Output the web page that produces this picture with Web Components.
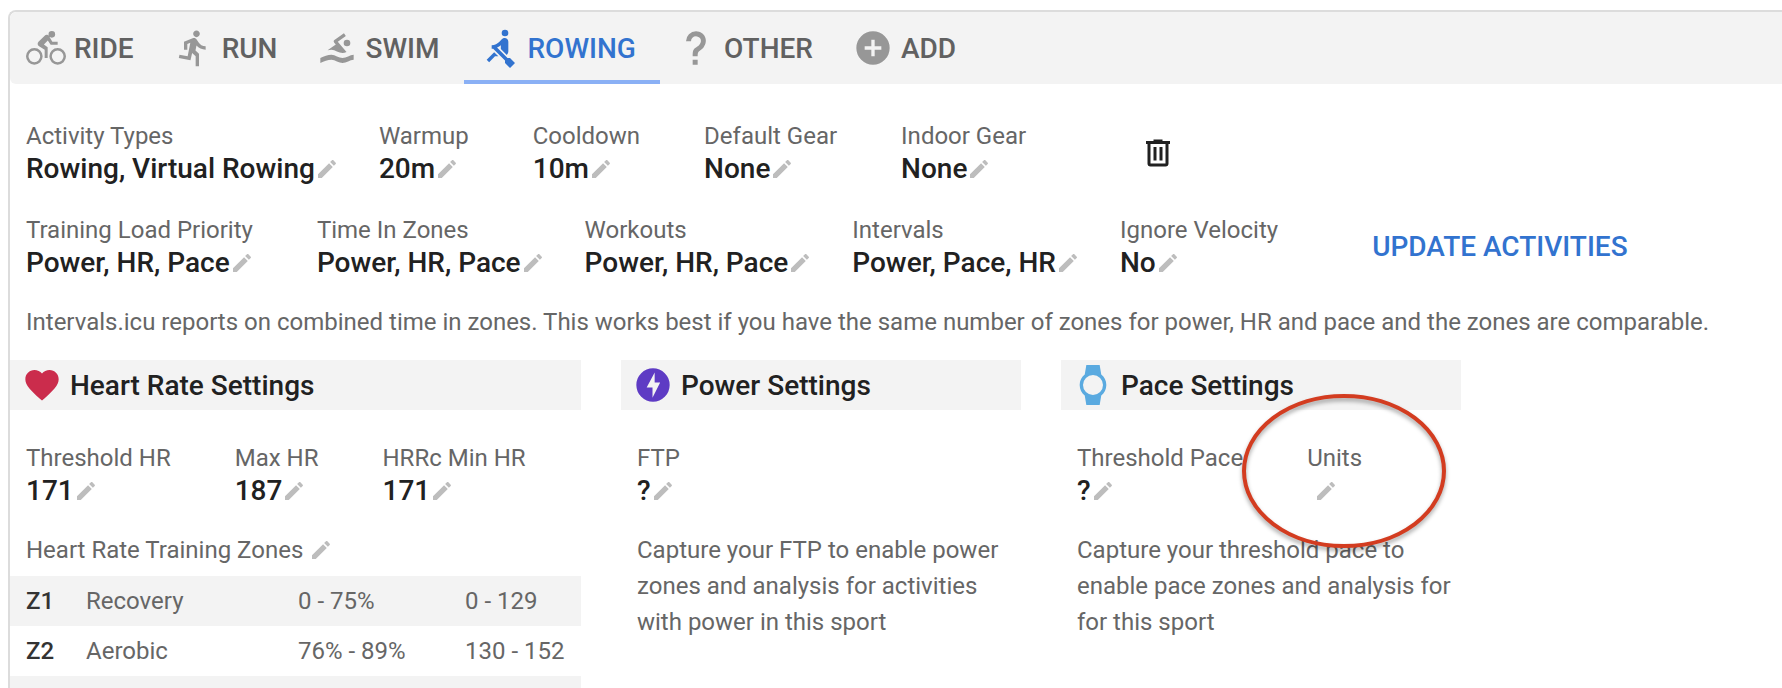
<!DOCTYPE html>
<html lang="en">
<head>
<meta charset="UTF-8">
<meta name="viewport" content="width=device-width, initial-scale=1.0">
<title>Sport Settings</title>
<style>
    :root {
        --text: #212121;
        --muted: #666666;
        --icon: #979797;
        --pencil: #bdbdbd;
        --band: #f3f3f3;
        --line: #dcdcdc;
        --primary: #3273cf;
        --primary-light: #8ab0f5;
    }
    html {
        overflow: hidden;
    }
    body {
        box-sizing: border-box;
        height: 100vh;
        margin: 0;
        padding: 10px 0 0 8px;
        overflow: hidden;
        background: #fff;
        color: var(--text);
        font-family: Roboto, "Liberation Sans", sans-serif;
        font-size: 24px;
    }
</style>
</head>
<body>

<sport-settings>
    <sport-tabs slot="tabs">
        <sport-tab icon="bike">RIDE</sport-tab>
        <sport-tab icon="run">RUN</sport-tab>
        <sport-tab icon="swim">SWIM</sport-tab>
        <sport-tab icon="rowing" active>ROWING</sport-tab>
        <sport-tab icon="help">OTHER</sport-tab>
        <sport-tab icon="plus">ADD</sport-tab>
    </sport-tabs>

    <field-row>
        <edit-field label="Activity Types">Rowing, Virtual Rowing</edit-field>
        <edit-field label="Warmup">20m</edit-field>
        <edit-field label="Cooldown">10m</edit-field>
        <edit-field label="Default Gear">None</edit-field>
        <edit-field label="Indoor Gear">None</edit-field>
        <icon-button icon="trash" label="Delete sport"></icon-button>
    </field-row>

    <field-row>
        <edit-field label="Training Load Priority">Power, HR, Pace</edit-field>
        <edit-field label="Time In Zones">Power, HR, Pace</edit-field>
        <edit-field label="Workouts">Power, HR, Pace</edit-field>
        <edit-field label="Intervals">Power, Pace, HR</edit-field>
        <edit-field label="Ignore Velocity">No</edit-field>
        <text-button>UPDATE ACTIVITIES</text-button>
    </field-row>

    <help-text slot="note">Intervals.icu reports on combined time in zones. This works best if you have the same number of zones for power, HR and pace and the zones are comparable.</help-text>

    <settings-panel slot="panels" icon="heart" heading="Heart Rate Settings" style="--accent: #cb2c4c">
        <field-row>
            <edit-field label="Threshold HR">171</edit-field>
            <edit-field label="Max HR">187</edit-field>
            <edit-field label="HRRc Min HR">171</edit-field>
        </field-row>
        <zone-table heading="Heart Rate Training Zones"></zone-table>
    </settings-panel>

    <settings-panel slot="panels" icon="bolt" heading="Power Settings" style="--accent: #5e3bc4">
        <field-row>
            <edit-field label="FTP">?</edit-field>
        </field-row>
        <help-text>Capture your FTP to enable power zones and analysis for activities with power in this sport</help-text>
    </settings-panel>

    <settings-panel slot="panels" icon="watch" heading="Pace Settings" style="--accent: #5aaae0">
        <field-row>
            <edit-field label="Threshold Pace">?</edit-field>
            <edit-field label="Units" highlight>&nbsp;</edit-field>
        </field-row>
        <help-text>Capture your threshold pace to enable pace zones and analysis for for this sport</help-text>
    </settings-panel>
</sport-settings>

<script>
const ICONS = {
    bike: 'M5,20.5A3.5,3.5 0 0,1 1.5,17A3.5,3.5 0 0,1 5,13.5A3.5,3.5 0 0,1 8.5,17A3.5,3.5 0 0,1 5,20.5M5,12A5,5 0 0,0 0,17A5,5 0 0,0 5,22A5,5 0 0,0 10,17A5,5 0 0,0 5,12M14.8,10H19V8.2H15.8L13.86,4.93C13.57,4.43 13,4.1 12.4,4.1C11.93,4.1 11.5,4.29 11.2,4.6L7.5,8.29C7.19,8.6 7,9 7,9.5C7,10.13 7.33,10.66 7.85,10.97L11.2,13V18H13V11.5L10.75,9.85L13.07,7.5M19,20.5A3.5,3.5 0 0,1 15.5,17A3.5,3.5 0 0,1 19,13.5A3.5,3.5 0 0,1 22.5,17A3.5,3.5 0 0,1 19,20.5M19,12A5,5 0 0,0 14,17A5,5 0 0,0 19,22A5,5 0 0,0 24,17A5,5 0 0,0 19,12M15.5,5.8A2,2 0 0,0 17.5,3.8A2,2 0 0,0 15.5,1.8A2,2 0 0,0 13.5,3.8A2,2 0 0,0 15.5,5.8Z',
    run: 'M13.49 5.48c1.1 0 2-.9 2-2s-.9-2-2-2-2 .9-2 2 .9 2 2 2zm-3.6 13.9l1-4.4 2.1 2v6h2v-7.5l-2.1-2 .6-3c1.3 1.5 3.3 2.5 5.5 2.5v-2c-1.9 0-3.5-1-4.3-2.4l-1-1.6c-.4-.6-1-1-1.7-1-.3 0-.5.1-.8.1l-5.2 2.2v4.7h2v-3.4l1.8-.7-1.6 8.1-4.9-1-.4 2 7 1.4z',
    swim: 'M2,18C4.22,17 6.44,16 8.67,16C10.89,16 13.11,18 15.33,18C17.56,18 19.78,16 22,16V19C19.78,19 17.56,21 15.33,21C13.11,21 10.89,19 8.67,19C6.44,19 4.22,20 2,21V18M8.67,13C7.89,13 7.12,13.12 6.35,13.32L11.27,9.88L10.23,8.64C10.09,8.47 10,8.24 10,8C10,7.66 10.17,7.35 10.44,7.17L16.16,3.17L17.31,4.8L12.47,8.19L17.7,14.42C16.91,14.75 16.12,15 15.33,15C13.11,15 10.89,13 8.67,13M18,7A2,2 0 0,1 20,9A2,2 0 0,1 18,11A2,2 0 0,1 16,9A2,2 0 0,1 18,7Z',
    rowing: 'M8.5,14.5L4,19L5.5,20.5L9,17H11L8.5,14.5M15,1A2,2 0 0,0 13,3A2,2 0 0,0 15,5A2,2 0 0,0 17,3A2,2 0 0,0 15,1M21,21L18,24L15,21V19.5L7.91,12.41C7.6,12.46 7.3,12.5 7,12.5V10.32C8.66,10.35 10.61,9.45 11.67,8.28L13.07,6.73C13.26,6.5 13.5,6.35 13.76,6.23C14.05,6.09 14.38,6 14.72,6H14.75C16,6 17,7 17,8.26V14C17,14.85 16.65,15.62 16.08,16.17L12.5,12.59V10.32C11.87,10.84 11.07,11.34 10.21,11.71L16.5,18H18L21,21Z',
    help: 'M10,19H13V22H10V19M12,2C17.35,2.22 19.68,7.62 16.5,11.67C15.67,12.67 14.33,13.33 13.67,14.17C13,15 13,16 13,17H10C10,15.33 10,13.92 10.67,12.92C11.33,11.92 12.67,11.33 13.5,10.67C15.92,8.43 15.32,5.26 12,5A3,3 0 0,0 9,8H6A6,6 0 0,1 12,2Z',
    plus: 'M17,13H13V17H11V13H7V11H11V7H13V11H17M12,2A10,10 0 0,0 2,12A10,10 0 0,0 12,22A10,10 0 0,0 22,12A10,10 0 0,0 12,2Z',
    pencil: 'M20.71,7.04C21.1,6.65 21.1,6 20.71,5.63L18.37,3.29C18,2.9 17.35,2.9 16.96,3.29L15.12,5.12L18.87,8.87M3,17.25V21H6.75L17.81,9.93L14.06,6.18L3,17.25Z',
    trash: 'M9,3V4H4V6H5V19A2,2 0 0,0 7,21H17A2,2 0 0,0 19,19V6H20V4H15V3H9M7,6H17V19H7V6M9,8V17H11V8H9M13,8V17H15V8H13Z',
    heart: 'M12,21.35L10.55,20.03C5.4,15.36 2,12.27 2,8.5C2,5.41 4.42,3 7.5,3C9.24,3 10.91,3.81 12,5.08C13.09,3.81 14.76,3 16.5,3C19.58,3 22,5.41 22,8.5C22,12.27 18.6,15.36 13.45,20.03L12,21.35Z',
    bolt: 'M12,2A10,10 0 0,0 2,12A10,10 0 0,0 12,22A10,10 0 0,0 22,12A10,10 0 0,0 12,2M11.7,19.6V13.5H8.2L13,4.5V10.5H16.3L11.7,19.6Z',
    watch: 'M6,12A6,6 0 0,1 12,6A6,6 0 0,1 18,12A6,6 0 0,1 12,18A6,6 0 0,1 6,12M20,12C20,9.45 18.81,7.19 16.95,5.73L16,0H8L7.05,5.73C5.19,7.19 4,9.45 4,12C4,14.54 5.19,16.81 7.05,18.27L8,24H16L16.95,18.27C18.81,16.81 20,14.54 20,12Z'
};

const BUTTON_RESET = `
    button {
        margin: 0;
        padding: 0;
        border: none;
        background: none;
        color: inherit;
        font: inherit;
        cursor: pointer;
    }
`;

class MdiIcon extends HTMLElement {
    connectedCallback() {
        this.attachShadow({ mode: 'open' });
        this.shadowRoot.innerHTML = `
            <style>
                :host {
                    display: block;
                    flex: none;
                    width: var(--size, 40px);
                    height: var(--size, 40px);
                }
                svg {
                    display: block;
                    width: 100%;
                    height: 100%;
                    fill: currentColor;
                }
            </style>
            <svg viewBox="0 0 24 24" aria-hidden="true">
                <path d="${ICONS[this.getAttribute('name')]}"/>
            </svg>
        `;
    }
}

class IconButton extends HTMLElement {
    connectedCallback() {
        this.attachShadow({ mode: 'open' });
        this.shadowRoot.innerHTML = `
            <style>
                ${BUTTON_RESET}
                :host {
                    display: block;
                    --size: 36px;
                    padding-left: 50px;
                }
                :host([small]) {
                    --size: 24px;
                    padding: 0;
                    color: var(--pencil);
                }
                button { display: block; }
            </style>
            <button type="button" aria-label="${this.getAttribute('label')}">
                <mdi-icon name="${this.getAttribute('icon')}"></mdi-icon>
            </button>
        `;
    }
}

class TextButton extends HTMLElement {
    connectedCallback() {
        this.attachShadow({ mode: 'open' });
        this.shadowRoot.innerHTML = `
            <style>
                ${BUTTON_RESET}
                :host {
                    display: block;
                    color: var(--primary);
                    font-size: 28px;
                    font-weight: 500;
                    line-height: 32px;
                }
                button { padding: 16px 30px; }
            </style>
            <button type="button"><slot></slot></button>
        `;
    }
}

class SportTabs extends HTMLElement {
    connectedCallback() {
        this.attachShadow({ mode: 'open' });
        this.shadowRoot.innerHTML = `
            <style>
                :host {
                    display: flex;
                    height: 72px;
                    background: var(--band);
                    border-radius: 6px 0 0 6px;
                }
            </style>
            <slot></slot>
        `;
    }
}

class SportTab extends HTMLElement {
    connectedCallback() {
        this.attachShadow({ mode: 'open' });
        this.shadowRoot.innerHTML = `
            <style>
                ${BUTTON_RESET}
                :host {
                    display: flex;
                    color: #616161;
                    font-size: 28px;
                    font-weight: 500;
                }
                button {
                    display: flex;
                    align-items: center;
                    gap: 8px;
                    padding: 0 24px 0 16px;
                }
                mdi-icon { color: var(--icon); }
                :host([active]) {
                    color: var(--primary);
                    box-shadow: inset 0 -4px var(--primary-light);
                }
                :host([active]) mdi-icon { color: inherit; }
            </style>
            <button type="button">
                <mdi-icon name="${this.getAttribute('icon')}"></mdi-icon>
                <span><slot></slot></span>
            </button>
        `;
    }
}

class FieldRow extends HTMLElement {
    connectedCallback() {
        this.attachShadow({ mode: 'open' });
        this.shadowRoot.innerHTML = `
            <style>
                :host {
                    display: flex;
                    align-items: center;
                    gap: 40px;
                    padding: 0 16px;
                }
            </style>
            <slot></slot>
        `;
    }
}

class EditField extends HTMLElement {
    connectedCallback() {
        const label = this.getAttribute('label');
        this.attachShadow({ mode: 'open' });
        this.shadowRoot.innerHTML = `
            <style>
                :host {
                    display: block;
                    position: relative;
                    white-space: nowrap;
                }
                .label {
                    padding-right: 24px;
                    color: var(--muted);
                    line-height: 32px;
                }
                .value {
                    display: flex;
                    align-items: center;
                    font-size: 28px;
                    font-weight: 500;
                    line-height: 34px;
                }
                .text { white-space: pre; }
                /* ring that calls out a field */
                .ring {
                    position: absolute;
                    left: -69px;
                    top: -52px;
                    width: 212px;
                    height: 164px;
                    overflow: visible;
                    pointer-events: none;
                    filter: drop-shadow(0 3px 2px rgba(0, 0, 0, 0.35));
                }
            </style>
            <div class="label">${label}</div>
            <div class="value">
                <span class="text"><slot></slot></span>
                <icon-button small icon="pencil" label="Edit ${label}"></icon-button>
            </div>
            ${this.hasAttribute('highlight') ? `
            <svg class="ring" viewBox="0 0 212 164" aria-hidden="true">
                <ellipse cx="106" cy="81" rx="100" ry="75" fill="none" stroke="#d33c20" stroke-width="4"/>
            </svg>` : ''}
        `;
    }
}

class HelpText extends HTMLElement {
    connectedCallback() {
        this.attachShadow({ mode: 'open' });
        this.shadowRoot.innerHTML = `
            <style>
                :host {
                    display: block;
                    padding: 0 0 0 16px;
                    color: var(--muted);
                    line-height: 36px;
                }
                p { margin: 0; }
            </style>
            <p><slot></slot></p>
        `;
    }
}

class SettingsPanel extends HTMLElement {
    connectedCallback() {
        this.attachShadow({ mode: 'open' });
        this.shadowRoot.innerHTML = `
            <style>
                :host {
                    display: flex;
                    flex-direction: column;
                    gap: 24px;
                    min-width: 0;
                }
                header {
                    display: flex;
                    align-items: center;
                    gap: 8px;
                    height: 50px;
                    margin-bottom: 8px;
                    padding: 0 12px;
                    background: var(--band);
                }
                h2 {
                    margin: 0;
                    font-size: 28px;
                    font-weight: 500;
                    white-space: nowrap;
                }
                mdi-icon { color: var(--accent); }
            </style>
            <header>
                <mdi-icon name="${this.getAttribute('icon')}"></mdi-icon>
                <h2>${this.getAttribute('heading')}</h2>
            </header>
            <slot></slot>
        `;
    }
}

class ZoneTable extends HTMLElement {
    connectedCallback() {
        const zones = [
            ['Z1', 'Recovery', '0 - 75%', '0 - 129'],
            ['Z2', 'Aerobic', '76% - 89%', '130 - 152'],
            ['', '', '', '']
        ];
        const rows = zones.map(([zone, name, percent, bpm]) => `
            <tr><th scope="row">${zone}</th><td>${name}</td><td>${percent}</td><td>${bpm}</td></tr>
        `).join('');

        this.attachShadow({ mode: 'open' });
        this.shadowRoot.innerHTML = `
            <style>
                :host {
                    display: block;
                    color: var(--muted);
                }
                table {
                    width: 100%;
                    table-layout: fixed;
                    border-collapse: collapse;
                    white-space: nowrap;
                }
                caption {
                    padding: 0 16px 8px;
                    text-align: left;
                    line-height: 36px;
                }
                .title {
                    display: flex;
                    align-items: center;
                    gap: 6px;
                }
                tr { height: 50px; }
                tr:nth-child(odd) { background: var(--band); }
                th, td {
                    padding: 0;
                    text-align: left;
                    font-weight: 400;
                }
                th {
                    padding-left: 16px;
                    color: #333;
                    font-weight: 500;
                }
                .zone { width: 76px; }
                .name { width: 212px; }
                .percent { width: 167px; }
            </style>
            <table>
                <caption>
                    <div class="title">
                        ${this.getAttribute('heading')}
                        <icon-button small icon="pencil" label="Edit zones"></icon-button>
                    </div>
                </caption>
                <colgroup><col class="zone"><col class="name"><col class="percent"><col></colgroup>
                <tbody>${rows}</tbody>
            </table>
        `;
    }
}

class SportSettings extends HTMLElement {
    connectedCallback() {
        this.attachShadow({ mode: 'open' });
        this.shadowRoot.innerHTML = `
            <style>
                :host {
                    display: block;
                    box-sizing: border-box;
                    height: 100%;
                    overflow: hidden;
                    border: solid var(--line);
                    border-width: 2px 0 0 2px;
                    border-radius: 8px 0 0 0;
                }
                .fields {
                    display: flex;
                    flex-direction: column;
                    gap: 28px;
                    padding: 36px 0 24px;
                }
                .note { padding-bottom: 20px; }
                .panels {
                    display: grid;
                    grid-template-columns: 571px 400px 400px;
                    gap: 40px;
                    align-items: start;
                }
            </style>
            <slot name="tabs"></slot>
            <section class="fields"><slot></slot></section>
            <section class="note"><slot name="note"></slot></section>
            <section class="panels"><slot name="panels"></slot></section>
        `;
    }
}

customElements.define('mdi-icon', MdiIcon);
customElements.define('icon-button', IconButton);
customElements.define('text-button', TextButton);
customElements.define('sport-tabs', SportTabs);
customElements.define('sport-tab', SportTab);
customElements.define('field-row', FieldRow);
customElements.define('edit-field', EditField);
customElements.define('help-text', HelpText);
customElements.define('settings-panel', SettingsPanel);
customElements.define('zone-table', ZoneTable);
customElements.define('sport-settings', SportSettings);
</script>
</body>
</html>
